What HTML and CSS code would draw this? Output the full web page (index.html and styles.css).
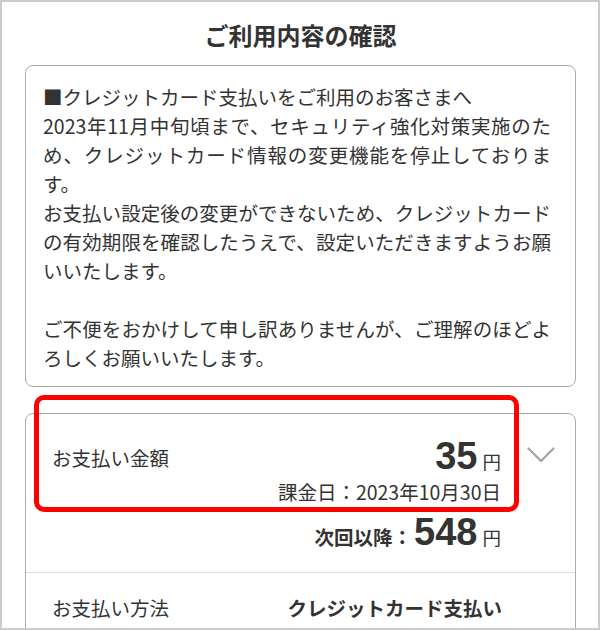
FILE: index.html
```html
<!DOCTYPE html>
<html lang="ja">
<head>
<meta charset="utf-8">
<title>ご利用内容の確認</title>
<link rel="stylesheet" href="styles.css">
</head>
<body>
<div class="frame">
  <h1 class="title">ご利用内容の確認</h1>

  <div class="notice">
    <p class="para">
      <span class="ln">■クレジットカード支払いをご利用のお客さまへ</span>
      <span class="ln jl">2023年11月中旬頃まで、セキュリティ強化対策実施のた</span>
      <span class="ln jl">め、クレジットカード情報の変更機能を停止しておりま</span>
      <span class="ln">す。</span>
      <span class="ln jl">お支払い設定後の変更ができないため、クレジットカード</span>
      <span class="ln jl">の有効期限を確認したうえで、設定いただきますようお願</span>
      <span class="ln">いいたします。</span>
    </p>
    <p class="para para-gap">
      <span class="ln jl">ご不便をおかけして申し訳ありませんが、ご理解のほどよ</span>
      <span class="ln">ろしくお願いいたします。</span>
    </p>
  </div>

  <div class="card">
    <div class="summary">
      <div class="label label-top">お支払い金額</div>
      <div class="amounts">
        <div class="amount"><span class="num">35</span><span class="yen">円</span></div>
        <div class="date">課金日：2023年10月30日</div>
        <div class="next"><span class="next-label">次回以降：</span><span class="num">548</span><span class="yen">円</span></div>
      </div>
      <svg class="chev" width="28" height="16" viewBox="0 0 28 16" aria-hidden="true">
        <polyline points="1.5,1.5 14,14 26.5,1.5" fill="none" stroke="#a6a6a6" stroke-width="2.4" stroke-linecap="round" stroke-linejoin="round"/>
      </svg>
    </div>
    <div class="row">
      <span class="label">お支払い方法</span>
      <span class="value">クレジットカード支払い</span>
    </div>
    <div class="highlight"></div>
  </div>
</div>
</body>
</html>
```

FILE: styles.css
```css
* {
  box-sizing: border-box;
}

html, body {
  margin: 0;
  padding: 0;
  background: #ffffff;
}

body {
  font-family: "Noto Sans CJK JP", "Noto Sans", sans-serif;
  color: #333333;
}

.frame {
  width: 600px;
  height: 630px;
  border: 2px solid #cccccc;
  overflow: hidden;
  padding: 16px 22px 0 23px;
  background: #ffffff;
}

.title {
  margin: 0 0 13px 0;
  font-size: 24px;
  line-height: 34px;
  font-weight: 700;
  text-align: center;
  color: #333333;
}

.notice {
  border: 1px solid #a9a9a9;
  border-radius: 8px;
  padding: 16px 24px 14px 17px;
  font-size: 19.5px;
  line-height: 29px;
}

.para {
  margin: 0;
}

.para-gap {
  margin-top: 29px;
}

.ln {
  display: block;
  white-space: nowrap;
}

.jl {
  text-align: justify;
  text-align-last: justify;
}

.card {
  position: relative;
  margin-top: 26px;
  border: 1px solid #aaaaaa;
  border-radius: 8px 8px 0 0;
  height: 400px;
  font-size: 19.5px;
}

.summary {
  display: flex;
  align-items: flex-start;
  padding: 22px 20px 18px 26px;
}

.label {
  line-height: 29px;
}

.label-top {
  flex: 1;
  margin-top: 7px;
}

.amounts {
  text-align: right;
}

.amount {
  height: 40px;
  line-height: 40px;
}

.num {
  font-family: "Liberation Sans", "Noto Sans CJK JP", sans-serif;
  font-size: 38px;
  font-weight: 700;
  color: #333333;
}

.yen {
  font-size: 18.5px;
  margin-left: 5px;
}

.date {
  margin-top: 1px;
  line-height: 29px;
}

.next {
  margin-top: 4px;
  height: 44px;
  line-height: 44px;
}

.next-label {
  font-weight: 700;
  margin-right: 2px;
}

.chev {
  display: block;
  margin-top: 11px;
  margin-left: 26px;
}

.row {
  display: flex;
  justify-content: space-between;
  border-top: 1px solid #dddddd;
  padding: 20px 73px 20px 26px;
  line-height: 29px;
}

.value {
  font-weight: 700;
}

.highlight {
  position: absolute;
  left: 8px;
  top: -19px;
  width: 485px;
  height: 117px;
  border: 5px solid #ff0000;
  border-radius: 10px;
  pointer-events: none;
}
```
